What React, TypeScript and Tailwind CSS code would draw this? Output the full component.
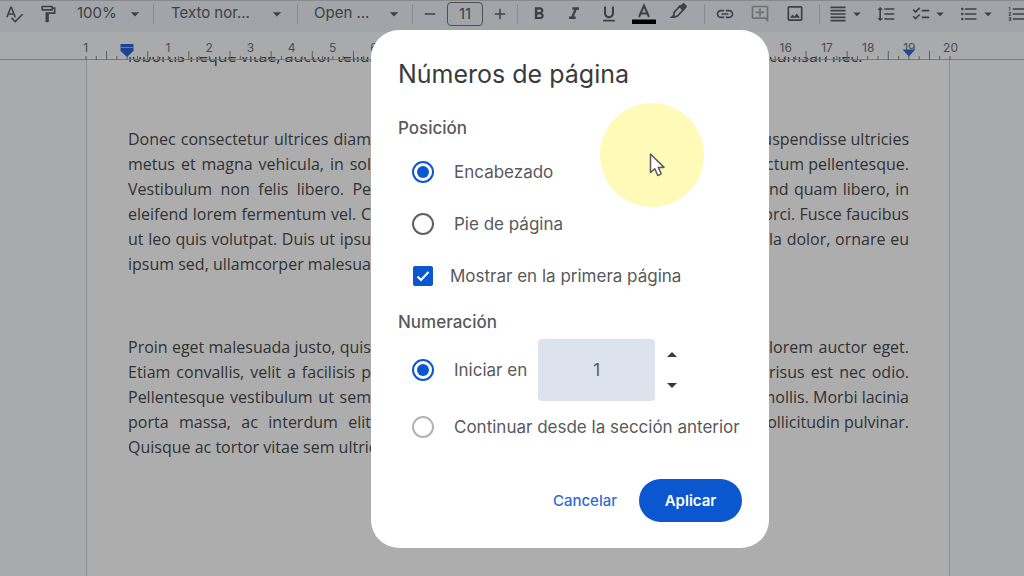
import clsx from "clsx";
import { FC, ReactNode, useState } from "react";
import {
  MdAdd,
  MdArrowDropDown,
  MdArrowDropUp,
  MdChecklist,
  MdFormatAlignJustify,
  MdFormatBold,
  MdFormatItalic,
  MdFormatLineSpacing,
  MdFormatListBulleted,
  MdFormatListNumbered,
  MdFormatUnderlined,
  MdLink,
  MdOutlineAddComment,
  MdOutlineFormatPaint,
  MdOutlineImage,
  MdRemove,
  MdSpellcheck,
} from "react-icons/md";

interface ToolProps {
  label: string;
  children: ReactNode;
  className?: string;
}

const Tool: FC<ToolProps> = ({ label, children, className = "w-5 justify-center" }) => (
  <button
    type="button"
    aria-label={label}
    className={clsx("flex h-6 shrink-0 items-center", className)}
  >
    {children}
  </button>
);

const Divider: FC = () => <span className="h-5 w-px shrink-0 bg-[#c9ccd2]" />;

const Toolbar: FC = () => (
  <header className="flex h-8 items-center gap-2 overflow-hidden border-t border-[#c9ccd2] bg-[#edf2fa] pb-[6px] pl-1 text-[15px] text-[#5c5f64]">
    <div className="flex shrink-0 gap-[14px] pr-[11px]">
      <Tool label="Ortografía">
        <MdSpellcheck size={20} />
      </Tool>
      <Tool label="Copiar formato">
        <MdOutlineFormatPaint size={20} />
      </Tool>
    </div>
    <Tool label="Zoom" className="w-[68px] justify-between">
      100%
      <MdArrowDropDown size={20} />
    </Tool>
    <Divider />
    <Tool label="Estilos" className="mr-[2px] ml-[9px] w-[116px] justify-between">
      Texto nor...
      <MdArrowDropDown size={20} />
    </Tool>
    <Divider />
    <Tool label="Fuente" className="ml-2 w-[90px] justify-between">
      Open ...
      <MdArrowDropDown size={20} />
    </Tool>
    <Divider />
    <Tool label="Reducir tamaño de fuente" className="w-[18px]">
      <MdRemove size={18} />
    </Tool>
    <input
      aria-label="Tamaño de fuente"
      defaultValue="11"
      className="h-6 w-9 shrink-0 rounded border border-[#74777a] bg-transparent text-center"
    />
    <Tool label="Aumentar tamaño de fuente" className="w-[18px]">
      <MdAdd size={18} />
    </Tool>
    <Divider />
    <div className="flex shrink-0 gap-[15px] pr-[7px] pl-[3px]">
      <Tool label="Negrita">
        <MdFormatBold size={22} />
      </Tool>
      <Tool label="Cursiva">
        <MdFormatItalic size={22} />
      </Tool>
      <Tool label="Subrayado">
        <MdFormatUnderlined size={20} />
      </Tool>
      <Tool label="Color de texto">
        <svg width="24" height="24" viewBox="0 0 24 24" className="shrink-0">
          <path d="M7 15 12 3.5 17 15M8.8 11.5h6.4" fill="none" stroke="currentColor" strokeWidth="2" />
          <path d="M0 17.500h24v4.500H0z" fill="#000" />
        </svg>
      </Tool>
      <Tool label="Color de resaltado">
        <svg width="20" height="24" viewBox="0 0 20 24" className="shrink-0">
          <path
            d="m5 10.500 6-6.500 3.500 3.500-6 6.500-3.500 1H3l2-2z"
            fill="none"
            stroke="currentColor"
            strokeWidth="1.800"
          />
          <path d="m10 5 3.500-3.500q1-.8 2 0l2 2q.8 1 0 2L14 9z" fill="currentColor" />
        </svg>
      </Tool>
    </div>
    <Divider />
    <div className="flex shrink-0 gap-[15px] pr-[6px] pl-[2px]">
      <Tool label="Insertar enlace">
        <MdLink size={22} />
      </Tool>
      <Tool label="Añadir comentario">
        <MdOutlineAddComment size={20} className="text-[#a3a6ab]" />
      </Tool>
      <Tool label="Insertar imagen">
        <MdOutlineImage size={21} />
      </Tool>
    </div>
    <Divider />
    <div className="flex shrink-0 gap-[10px]">
      <Tool label="Alinear" className="w-[38px]">
        <MdFormatAlignJustify size={20} />
        <MdArrowDropDown size={18} />
      </Tool>
      <Tool label="Interlineado">
        <MdFormatLineSpacing size={20} />
      </Tool>
      <Tool label="Lista de comprobación" className="ml-[5px] w-[38px]">
        <MdChecklist size={22} />
        <MdArrowDropDown size={20} />
      </Tool>
      <Tool label="Lista con viñetas" className="w-[38px]">
        <MdFormatListBulleted size={22} />
        <MdArrowDropDown size={20} />
      </Tool>
      <Tool label="Lista numerada">
        <MdFormatListNumbered size={22} />
      </Tool>
    </div>
  </header>
);

const rulerLabels = ["1", "", ...Array.from({ length: 20 }, (_, i) => `${i + 1}`)];
const rulerTicks = Array.from({ length: 85 }, (_, i) => i);

const Ruler: FC = () => (
  <div className="relative z-10 flex h-[25px] justify-center bg-[#f9fbfd] pt-[10px] pl-3">
    <div className="w-full max-w-[864px]">
      <div className="-mx-[21px] flex text-xs leading-3 text-[#707479]">
        {rulerLabels.map((label, i) => (
          <span key={i} className="flex-1 text-center">
            {label}
          </span>
        ))}
      </div>
    </div>
    {/* Ticks and indent markers */}
    <div className="absolute inset-x-0 top-3 flex h-4 justify-center border-b border-[#b4b6b9] pl-3">
      <svg
        viewBox="0 0 864 16"
        preserveAspectRatio="none"
        className="h-4 w-full max-w-[864px] overflow-visible"
      >
        {rulerTicks.map((i) => (
          <path
            key={i}
            d={`M${(i * 864) / 84} 16v${i % 4 === 2 ? -9 : -4}`}
            stroke="#85888c"
            strokeWidth="1"
          />
        ))}
        <path d="M34.500 0h13v7l-6.500 6-6.500-6z" fill="#2a63dd" />
        <path d="M34.500 3.500h13" stroke="#9db9f5" strokeWidth="1" />
        <path d="M816.500 5.500h12.500l-6 7z" fill="#2a6fd6" />
      </svg>
    </div>
  </div>
);

interface Line {
  start: string;
  end?: string;
  last?: boolean;
}

const paragraphs: Line[][] = [
  [{ start: "lobortis neque vitae, auctor tellus", end: "cumsan nec.", last: true }],
  [
    { start: "Donec consectetur ultrices diam", end: "uspendisse ultricies" },
    { start: "metus et magna vehicula, in sol", end: "ctum pellentesque." },
    { start: "Vestibulum non felis libero. Pe", end: "nd quam libero, in" },
    { start: "eleifend lorem fermentum vel. C", end: "orci. Fusce faucibus" },
    { start: "ut leo quis volutpat. Duis ut ipsu", end: "la dolor, ornare eu" },
    { start: "ipsum sed, ullamcorper malesua", last: true },
  ],
  [
    { start: "Proin eget malesuada justo, quis", end: "lorem auctor eget." },
    { start: "Etiam convallis, velit a facilisis p", end: "risus est nec odio." },
    { start: "Pellentesque vestibulum ut sem", end: "mollis. Morbi lacinia" },
    { start: "porta massa, ac interdum elit", end: "ollicitudin pulvinar." },
    { start: "Quisque ac tortor vitae sem ultric", last: true },
  ],
];

const Page: FC = () => (
  <main className="flex flex-1 justify-center overflow-hidden pl-3">
    <div className="flex w-full max-w-[864px] flex-col border-x border-[#d3d5d9] bg-white pr-10 pl-[41px]">
      <div className="-mt-[13px] flex flex-col gap-[58px] font-['Open_Sans',sans-serif] text-base leading-[25px] text-[#4a4a4d]">
        {paragraphs.map((lines, i) => (
          <div key={i}>
            {lines.map(({ start, end, last }) => (
              <p
                key={start}
                className={clsx(
                  "grid grid-cols-[243px_1fr_140px] whitespace-nowrap",
                  !last && "[text-align-last:justify]"
                )}
              >
                <span>{start}</span>
                <span />
                <span className="w-max min-w-full justify-self-end">{end}</span>
              </p>
            ))}
          </div>
        ))}
      </div>
    </div>
  </main>
);

interface RadioProps {
  name: string;
  label: string;
  checked: boolean;
  muted?: boolean;
  onChange: () => void;
}

const Radio: FC<RadioProps> = ({ name, label, checked, muted, onChange }) => (
  <label className="flex h-[52px] items-center gap-5">
    <input
      type="radio"
      name={name}
      checked={checked}
      onChange={onChange}
      className={clsx(
        "grid size-[22px] shrink-0 appearance-none place-content-center rounded-full border-2 before:size-3 before:rounded-full checked:border-[#0b57d0] checked:before:bg-[#0b57d0]",
        muted ? "border-[#b1b3b5]" : "border-[#5f6265]"
      )}
    />
    {label}
  </label>
);

const PageNumbersDialog: FC = () => {
  const [position, setPosition] = useState("header");
  const [firstPage, setFirstPage] = useState(true);
  const [numbering, setNumbering] = useState("start");
  const [start, setStart] = useState(1);

  return (
    <div className="fixed inset-0 z-20 flex items-start justify-center bg-black/32 pt-[30px] sm:pl-[116px]">
      <form
        role="dialog"
        aria-labelledby="dialog-title"
        onSubmit={(e) => e.preventDefault()}
        className="relative w-full max-w-[398px] rounded-[28px] bg-white px-[27px] pt-7 pb-[26px] text-[17px] leading-6 text-[#58595c]"
      >
        <h1 id="dialog-title" className="text-[25px] leading-8 text-[#3a3b3d]">
          Números de página
        </h1>

        {/* Position */}
        <h2 className="mt-[26px] font-medium">Posición</h2>
        <div className="mt-[6px] pl-[14px]">
          <Radio
            name="position"
            label="Encabezado"
            checked={position === "header"}
            onChange={() => setPosition("header")}
          />
          <Radio
            name="position"
            label="Pie de página"
            checked={position === "footer"}
            onChange={() => setPosition("footer")}
          />
          <label className="flex h-[52px] items-center gap-4">
            <span className="grid size-[22px] shrink-0 place-items-center">
              <input
                type="checkbox"
                checked={firstPage}
                onChange={(e) => setFirstPage(e.target.checked)}
                className="peer col-start-1 row-start-1 size-5 appearance-none rounded-xs border-2 border-[#5f6265] checked:border-[#0b57d0] checked:bg-[#0b57d0]"
              />
              <svg
                viewBox="0 0 20 20"
                className="pointer-events-none invisible col-start-1 row-start-1 size-5 peer-checked:visible"
              >
                <path d="m4.500 10.500 3.500 3.500 7.500-8" fill="none" stroke="#fff" strokeWidth="2" />
              </svg>
            </span>
            Mostrar en la primera página
          </label>
        </div>

        {/* Numbering */}
        <h2 className="mt-2 font-medium">Numeración</h2>
        <div className="mt-[5px] pl-[14px]">
          <div className="flex items-center">
            <Radio
              name="numbering"
              label="Iniciar en"
              checked={numbering === "start"}
              onChange={() => setNumbering("start")}
            />
            <input
              aria-label="Número inicial"
              value={start}
              onChange={(e) => setStart(Number(e.target.value) || 1)}
              className="ml-[11px] h-[62px] w-[117px] rounded bg-[#dde3ed] text-center"
            />
            <div className="ml-[5px] flex flex-col gap-[6px] text-[#3a3b3d]">
              <button type="button" aria-label="Aumentar" onClick={() => setStart(start + 1)}>
                <MdArrowDropUp size={24} />
              </button>
              <button
                type="button"
                aria-label="Disminuir"
                onClick={() => setStart(Math.max(1, start - 1))}
              >
                <MdArrowDropDown size={24} />
              </button>
            </div>
          </div>
          <Radio
            name="numbering"
            label="Continuar desde la sección anterior"
            checked={numbering === "continue"}
            muted
            onChange={() => setNumbering("continue")}
          />
        </div>

        {/* Actions */}
        <div className="mt-[26px] flex justify-end gap-[22px] text-[15px] font-medium">
          <button type="button" className="text-[#2f6bd0]">
            Cancelar
          </button>
          <button
            type="submit"
            className="h-[43px] w-[103px] rounded-full bg-[#0b57d0] font-semibold text-white"
          >
            Aplicar
          </button>
        </div>

        {/* Pointer with its highlight */}
        <div className="pointer-events-none absolute top-[73px] left-[229px] size-[104px] rounded-full bg-[#fffab8]">
          <svg viewBox="0 0 104 104">
            <path
              d="M50.500 51v18.500l4.300-3.800 3 6.800 3.400-1.600-2.900-6.500h5.700z"
              fill="#fff"
              stroke="#5b5560"
              strokeWidth="1.500"
              strokeLinejoin="round"
            />
          </svg>
        </div>
      </form>
    </div>
  );
};

const App: FC = () => (
  <div className="flex min-h-screen flex-col bg-[#f9fbfd] font-['Inter',sans-serif]">
    <Toolbar />
    <Ruler />
    <Page />
    <PageNumbersDialog />
  </div>
);

export default App;
